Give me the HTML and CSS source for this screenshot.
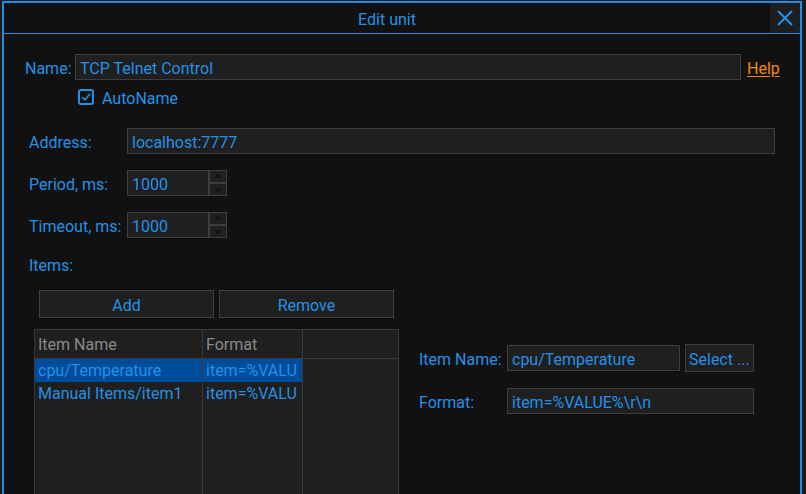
FILE: index.html
```html
<!DOCTYPE html>
<html>
<head>
<meta charset="utf-8">
<link rel="stylesheet" href="styles.css">
</head>
<body>
<div class="dialog">
  <div class="titlebar">
    <div class="title">Edit unit</div>
    <div class="close">
      <svg width="16" height="16" viewBox="0 0 16 16"><path d="M1 1 L15 15 M15 1 L1 15" stroke="#2391e6" stroke-width="2" fill="none"/></svg>
    </div>
  </div>
  <div class="content">
    <div class="row row-name">
      <span class="lbl-name">Name:</span>
      <div class="field name-field">TCP Telnet Control</div>
      <a class="help">Help</a>
    </div>
    <div class="row row-check">
      <span class="checkbox">
        <svg width="16" height="16" viewBox="0 0 16 16"><rect x="1" y="1" width="14" height="14" rx="2" stroke="#2391e6" stroke-width="2" fill="none"/><path d="M4.3 8.2 L7 10.8 L11.8 5" stroke="#2391e6" stroke-width="1.7" fill="none"/></svg>
      </span>
      <span class="check-text">AutoName</span>
    </div>
    <div class="row row-addr">
      <span class="lbl">Address:</span>
      <div class="field addr-field">localhost:7777</div>
    </div>
    <div class="row row-spin">
      <span class="lbl">Period, ms:</span>
      <div class="field spin-field">1000</div>
      <div class="spin">
        <div class="spin-btn"><svg width="8" height="5" viewBox="0 0 8 5"><path d="M1 4 L4 1 L7 4" stroke="#0c0c0c" stroke-width="1.3" fill="none"/></svg></div>
        <div class="spin-btn"><svg width="8" height="5" viewBox="0 0 8 5"><path d="M1 1 L4 4 L7 1" stroke="#0c0c0c" stroke-width="1.3" fill="none"/></svg></div>
      </div>
    </div>
    <div class="row row-spin">
      <span class="lbl">Timeout, ms:</span>
      <div class="field spin-field">1000</div>
      <div class="spin">
        <div class="spin-btn"><svg width="8" height="5" viewBox="0 0 8 5"><path d="M1 4 L4 1 L7 4" stroke="#0c0c0c" stroke-width="1.3" fill="none"/></svg></div>
        <div class="spin-btn"><svg width="8" height="5" viewBox="0 0 8 5"><path d="M1 1 L4 4 L7 1" stroke="#0c0c0c" stroke-width="1.3" fill="none"/></svg></div>
      </div>
    </div>
    <div class="items-label">Items:</div>
    <div class="lower">
      <div class="left">
        <div class="buttons">
          <div class="btn">Add</div>
          <div class="btn">Remove</div>
        </div>
        <div class="table">
          <div class="trow thead">
            <div class="cell c1">Item Name</div>
            <div class="cell c2">Format</div>
            <div class="cell c3"></div>
          </div>
          <div class="tbody">
            <div class="trow selected">
              <div class="cell c1">cpu/Temperature</div>
              <div class="cell c2">item=%VALU</div>
            </div>
            <div class="trow">
              <div class="cell c1">Manual Items/item1</div>
              <div class="cell c2">item=%VALU</div>
            </div>
            <div class="cols">
              <div class="col c1"></div>
              <div class="col c2"></div>
            </div>
          </div>
        </div>
      </div>
      <div class="right">
        <div class="row rrow">
          <span class="rlbl">Item Name:</span>
          <div class="field iname-field">cpu/Temperature</div>
          <div class="btn select-btn">Select ...</div>
        </div>
        <div class="row rrow rrow2">
          <span class="rlbl">Format:</span>
          <div class="field format-field">item=%VALUE%\r\n</div>
        </div>
      </div>
    </div>
  </div>
</div>
</body>
</html>
```

FILE: styles.css
```css
* { box-sizing: border-box; }
html, body {
  margin: 0;
  padding: 0;
  background: #1a1a1a;
  overflow: hidden;
  height: 494px;
}
body {
  font-family: Roboto, "Liberation Sans", sans-serif;
  font-size: 16px;
  line-height: 19px;
  color: #2391e6;
}
.dialog {
  margin: 1px 0 0 2px;
  width: 800px;
  height: 520px;
  background: #111111;
  border: 2px solid #1e8fe6;
  display: flex;
  flex-direction: column;
}
.titlebar {
  height: 31px;
  border-bottom: 1px solid #1e8fe6;
  display: flex;
  flex-shrink: 0;
}
.title {
  flex: 1;
  text-align: center;
  line-height: 30px;
  padding-top: 2px;
}
.close {
  width: 30px;
  height: 30px;
  background: #1e1e1e;
  display: flex;
  align-items: center;
  justify-content: center;
}
.content {
  flex: 1;
  display: flex;
  flex-direction: column;
}
.row {
  display: flex;
  align-items: center;
}
.field {
  height: 26px;
  line-height: 25px;
  padding-top: 1px;
  background: #1f1f1f;
  border: 1px solid #3e3e3e;
  padding-left: 4px;
  white-space: nowrap;
  overflow: hidden;
}
.lbl-name, .lbl, .rlbl, .help, .check-text, .items-label {
  position: relative;
  top: 1px;
}
.row-name {
  margin-top: 20px;
  padding-left: 21px;
}
.lbl-name {
  width: 50px;
}
.name-field {
  width: 666px;
}
.help {
  margin-left: 6px;
  color: #f08a0c;
  text-decoration: underline;
  text-underline-offset: 2px;
}
.row-check {
  margin-top: 9px;
  padding-left: 74px;
  height: 16px;
}
.checkbox {
  width: 16px;
  height: 16px;
  display: block;
}
.checkbox svg { display: block; }
.check-text {
  margin-left: 8px;
}
.row-addr {
  margin-top: 23px;
  padding-left: 25px;
}
.lbl {
  width: 98px;
}
.addr-field {
  width: 648px;
}
.row-spin {
  margin-top: 16px;
  padding-left: 25px;
}
.spin-field {
  width: 82px;
}
.spin {
  width: 18px;
  height: 26px;
  display: flex;
  flex-direction: column;
}
.spin-btn {
  height: 13px;
  background: #202020;
  border: 1px solid #3e3e3e;
  display: flex;
  align-items: center;
  justify-content: center;
}
.spin-btn svg { display: block; }
.items-label {
  margin-top: 17px;
  padding-left: 25px;
}
.lower {
  display: flex;
  margin-top: 16px;
}
.left {
  display: flex;
  flex-direction: column;
}
.buttons {
  display: flex;
  gap: 5px;
  padding-left: 35px;
}
.btn {
  width: 175px;
  height: 28px;
  line-height: 27px;
  padding-top: 1px;
  text-align: center;
  background: #1f1f1f;
  border: 1px solid #3e3e3e;
}
.table {
  margin-top: 11px;
  margin-left: 30px;
  width: 365px;
  height: 220px;
  background: #1f1f1f;
  border: 1px solid #3a3a3a;
  display: flex;
  flex-direction: column;
}
.trow {
  display: flex;
  height: 23px;
  line-height: 24px;
}
.thead {
  height: 29px;
  line-height: 30px;
  border-bottom: 1px solid #3a3a3a;
  color: #8a8a8a;
}
.cell {
  white-space: nowrap;
  overflow: hidden;
  padding-left: 3px;
}
.c1 { width: 168px; border-right: 1px solid #3a3a3a; }
.c2 { width: 100px; border-right: 1px solid #3a3a3a; }
.c3 { flex: 1; }
.tbody {
  flex: 1;
  display: flex;
  flex-direction: column;
}
.selected .cell {
  background: #004c9c;
}
.cols {
  flex: 1;
  display: flex;
}
.col { height: 100%; }
.right {
  margin-left: 20px;
  margin-top: 54px;
  display: flex;
  flex-direction: column;
}
.rlbl {
  width: 88px;
}
.iname-field {
  width: 173px;
}
.select-btn {
  width: 69px;
  height: 28px;
  margin-left: 5px;
  padding-left: 3px;
  text-align: left;
}
.rrow2 {
  margin-top: 16px;
}
.format-field {
  width: 247px;
}
```
